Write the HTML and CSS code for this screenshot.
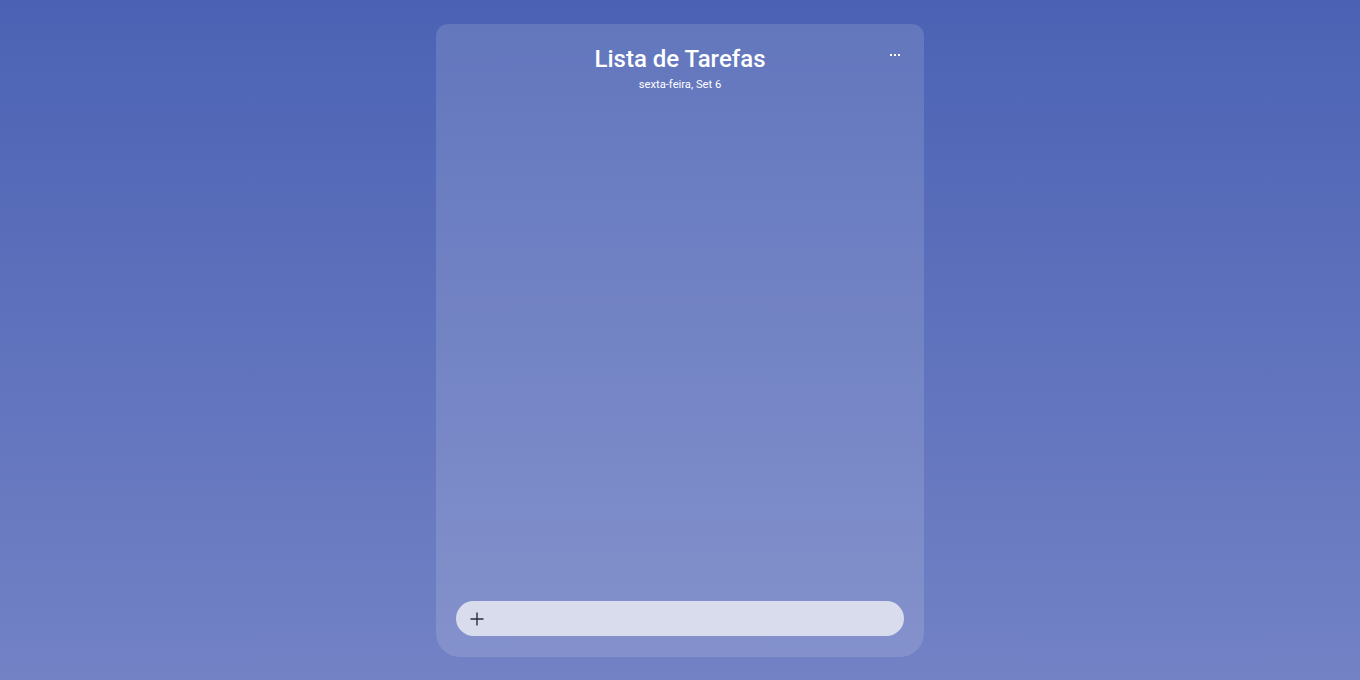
FILE: index.html
```html
<!DOCTYPE html>
<html lang="pt">
<head>
<meta charset="utf-8">
<title>Lista de Tarefas</title>
<link rel="stylesheet" href="styles.css">
</head>
<body>
<main class="app">
  <section class="card">
    <header class="card-header">
      <h1 class="title">Lista de Tarefas</h1>
      <p class="date">sexta-feira, Set 6</p>
      <button class="menu" aria-label="menu">
        <svg width="10" height="2" viewBox="0 0 10 2"><rect x="0" y="0" width="2" height="2" fill="#fff"/><rect x="4" y="0" width="2" height="2" fill="#fff"/><rect x="8" y="0" width="2" height="2" fill="#fff"/></svg>
      </button>
    </header>
    <div class="list"></div>
    <form class="add">
      <span class="plus">
        <svg width="14" height="14" viewBox="0 0 14 14"><path d="M7 0.5V13.5M0.5 7H13.5" stroke="#2b2d3a" stroke-width="1.4"/></svg>
      </span>
      <input class="add-input" type="text" aria-label="Nova tarefa">
    </form>
  </section>
</main>
</body>
</html>
```

FILE: styles.css
```css
* { box-sizing: border-box; }
html, body { margin: 0; height: 100%; }
body {
  background: linear-gradient(180deg, #4b62b4 0%, #7382c5 100%);
  font-family: Roboto, "Noto Sans", sans-serif;
  color: #fff;
}
.app {
  height: 680px;
  display: flex;
  justify-content: center;
  padding-top: 24px;
}
.card {
  width: 488px;
  height: 633px;
  background: rgba(255, 255, 255, 0.13);
  border-radius: 12px 12px 24px 24px;
  display: flex;
  flex-direction: column;
  padding: 20px 20px 21px;
}
.card-header {
  position: relative;
  text-align: center;
}
.title {
  margin: 0;
  font-size: 24px;
  font-weight: 500;
  line-height: 30px;
}
.date {
  margin: 4px 0 0;
  font-size: 11.2px;
  line-height: 14px;
  font-weight: 400;
}
.menu {
  position: absolute;
  right: 4px;
  top: 10px;
  background: none;
  border: 0;
  padding: 0;
  display: flex;
}
.list { flex: 1; }
.add {
  height: 35px;
  border-radius: 18px;
  background: #d8dcec;
  display: flex;
  align-items: center;
  padding-left: 14px;
  margin: 0;
}
.plus { display: flex; }
.add-input {
  flex: 1;
  border: 0;
  background: transparent;
  outline: none;
  height: 100%;
}
```
